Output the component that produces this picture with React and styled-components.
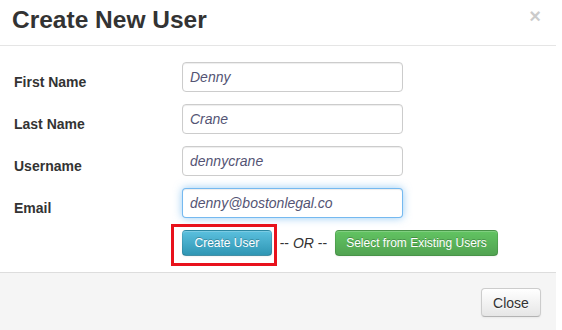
import { Fragment } from "react"
import styled, { createGlobalStyle } from "styled-components"

const Global = createGlobalStyle`
  body {
    margin: 0;
    background: #fff;
    font-family: "Liberation Sans", Arial, sans-serif;
    color: #333;
  }
`

const Modal = styled.div`
  width: 556px;
  background: #fff;
`

const Header = styled.div`
  display: flex;
  justify-content: space-between;
  align-items: flex-start;
  height: 46px;
  padding: 0 15px 0 12px;
  border-bottom: 1px solid #e5e5e5;
  box-sizing: border-box;
`

const Title = styled.h3`
  margin: 0;
  padding-top: 8px;
  font-size: 24.5px;
  line-height: 24px;
  font-weight: bold;
  color: #333;
`

const CloseX = styled.span`
  margin-top: 6px;
  font-size: 20px;
  line-height: 20px;
  font-weight: bold;
  color: #000;
  opacity: 0.2;
`

const Body = styled.div`
  display: grid;
  grid-template-columns: 168px 221px;
  row-gap: 12px;
  padding: 16px 14px 16px;
`

const Label = styled.label`
  padding-top: 10px;
  font-size: 14px;
  line-height: 20px;
  font-weight: bold;
  color: #333;
`

const Input = styled.input`
  box-sizing: border-box;
  width: 221px;
  height: 30px;
  padding: 0 7px;
  border: 1px solid ${(p) => (p.$focus ? "rgba(82,168,236,0.8)" : "#ccc")};
  border-radius: 4px;
  box-shadow: inset 0 1px 1px rgba(0, 0, 0, 0.075)
    ${(p) => (p.$focus ? ", 0 0 8px rgba(82,168,236,0.6)" : "")};
  font-family: "Liberation Sans", Arial, sans-serif;
  font-size: 14px;
  font-style: italic;
  color: #545474;
  outline: none;
`

const Actions = styled.div`
  grid-column: 2;
  display: flex;
  align-items: center;
  gap: 8px;
  white-space: nowrap;
`

const Highlight = styled.span`
  position: relative;
  display: inline-flex;
`

const RedBox = styled.span`
  position: absolute;
  left: -11px;
  top: -6px;
  width: 106px;
  height: 42px;
  box-sizing: border-box;
  border: 3px solid #e8121c;
  pointer-events: none;
`

const Button = styled.button`
  height: 26px;
  padding: 0 ${(p) => (p.$kind === "success" ? "10px" : "11.5px")};
  border: 1px solid;
  border-color: rgba(0, 0, 0, 0.1) rgba(0, 0, 0, 0.1) rgba(0, 0, 0, 0.25);
  border-radius: 4px;
  font-family: "Liberation Sans", Arial, sans-serif;
  font-size: 12px;
  color: #fff;
  text-shadow: 0 -1px 0 rgba(0, 0, 0, 0.25);
  background: ${(p) =>
    p.$kind === "success"
      ? "linear-gradient(#62c462, #51a351)"
      : "linear-gradient(#5bc0de, #2f96b4)"};
  box-shadow: inset 0 1px 0 rgba(255, 255, 255, 0.2), 0 1px 2px rgba(0, 0, 0, 0.05);
`

const Or = styled.span`
  font-size: 14px;
  color: #333;
  em {
    font-style: italic;
  }
`

const Footer = styled.div`
  display: flex;
  justify-content: flex-end;
  padding: 15px 15px 0;
  height: 58px;
  box-sizing: border-box;
  background: #f5f5f5;
  border-top: 1px solid #ddd;
`

const CloseButton = styled.button`
  width: 60px;
  height: 29px;
  border: 1px solid #ccc;
  border-bottom-color: #b3b3b3;
  border-radius: 4px;
  background: linear-gradient(#fff, #e6e6e6);
  box-shadow: inset 0 1px 0 rgba(255, 255, 255, 0.2), 0 1px 2px rgba(0, 0, 0, 0.05);
  font-family: "Liberation Sans", Arial, sans-serif;
  font-size: 14px;
  color: #333;
  text-shadow: 0 1px 1px rgba(255, 255, 255, 0.75);
`

const fields = [
  { id: "first", label: "First Name", value: "Denny" },
  { id: "last", label: "Last Name", value: "Crane" },
  { id: "user", label: "Username", value: "dennycrane" },
  { id: "email", label: "Email", value: "denny@bostonlegal.co", focus: true },
]

export default function App() {
  return (
    <Modal>
      <Global />
      <Header>
        <Title>Create New User</Title>
        <CloseX>×</CloseX>
      </Header>
      <Body>
        {fields.map((f) => (
          <Fragment key={f.id}>
            <Label htmlFor={f.id}>{f.label}</Label>
            <Input id={f.id} defaultValue={f.value} $focus={f.focus} />
          </Fragment>
        ))}
        <Actions>
          <Highlight>
            <Button>Create User</Button>
            <RedBox />
          </Highlight>
          <Or>-- <em>OR</em> --</Or>
          <Button $kind="success">Select from Existing Users</Button>
        </Actions>
      </Body>
      <Footer>
        <CloseButton>Close</CloseButton>
      </Footer>
    </Modal>
  )
}
